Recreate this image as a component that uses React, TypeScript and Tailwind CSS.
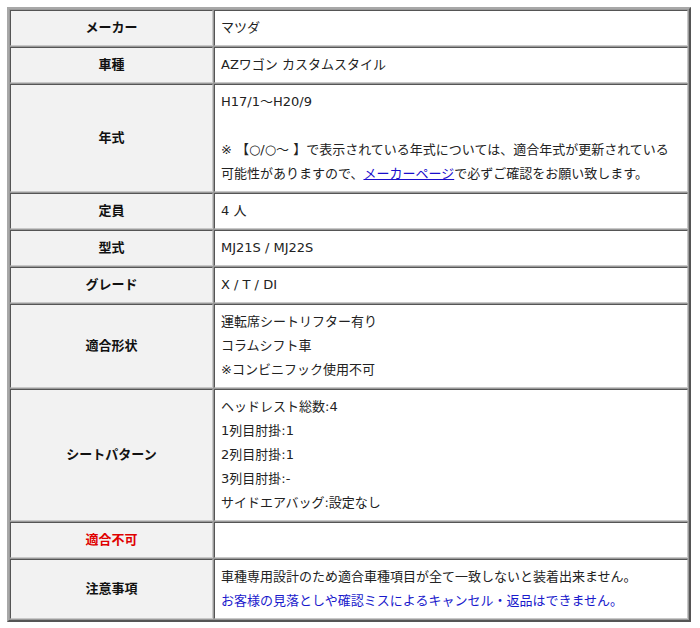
const font = { fontFamily: '"DejaVu Sans", "Noto Sans CJK JP", sans-serif' };

type Row = { label: string; red?: boolean; value: React.ReactNode };

const rows: Row[] = [
  { label: 'メーカー', value: 'マツダ' },
  { label: '車種', value: 'AZワゴン カスタムスタイル' },
  {
    label: '年式',
    value: (
      <>
        H17/1～H20/9
        <br />
        <br />
        ※ 【○/○～ 】で表示されている年式については、適合年式が更新されている
        <br />
        可能性がありますので、
        <a href="#" className="text-[#1a0dcc] underline">
          メーカーページ
        </a>
        で必ずご確認をお願い致します。
      </>
    ),
  },
  { label: '定員', value: '4 人' },
  { label: '型式', value: 'MJ21S / MJ22S' },
  { label: 'グレード', value: 'X / T / DI' },
  {
    label: '適合形状',
    value: (
      <>
        運転席シートリフター有り
        <br />
        コラムシフト車
        <br />
        ※コンビニフック使用不可
      </>
    ),
  },
  {
    label: 'シートパターン',
    value: (
      <>
        ヘッドレスト総数:4
        <br />
        1列目肘掛:1
        <br />
        2列目肘掛:1
        <br />
        3列目肘掛:-
        <br />
        サイドエアバッグ:設定なし
      </>
    ),
  },
  { label: '適合不可', red: true, value: '' },
  {
    label: '注意事項',
    value: (
      <>
        車種専用設計のため適合車種項目が全て一致しないと装着出来ません。
        <br />
        <span className="text-[#1a1acc]">お客様の見落としや確認ミスによるキャンセル・返品はできません。</span>
      </>
    ),
  },
];

export default function App() {
  return (
    <div className="bg-white w-[700px] h-[628px] pt-[7px] px-[7px]" style={font}>
      <table className="w-[684px] border-separate border-spacing-[1px] border-2 border-t-[#a8a8a8] border-l-[#a8a8a8] border-r-[#555] border-b-[#555] bg-[#9a9a9a] text-[13px] leading-[24px]">
        <tbody>
          {rows.map((r) => (
            <tr key={r.label}>
              <td
                className={`w-[203px] bg-[#f2f2f2] border border-t-[#555] border-l-[#555] border-r-[#c8c8c8] border-b-[#c8c8c8] py-[5px] text-center align-middle font-bold ${
                  r.red ? 'text-[#e00000]' : 'text-[#111]'
                }`}
              >
                {r.label}
              </td>
              <td className="bg-white border border-t-[#555] border-l-[#555] border-r-[#c8c8c8] border-b-[#c8c8c8] py-[5px] pl-[6px] pr-[4px] align-middle text-[#222] whitespace-nowrap">
                {r.value === '' ? '\u00a0' : r.value}
              </td>
            </tr>
          ))}
        </tbody>
      </table>
    </div>
  );
}
